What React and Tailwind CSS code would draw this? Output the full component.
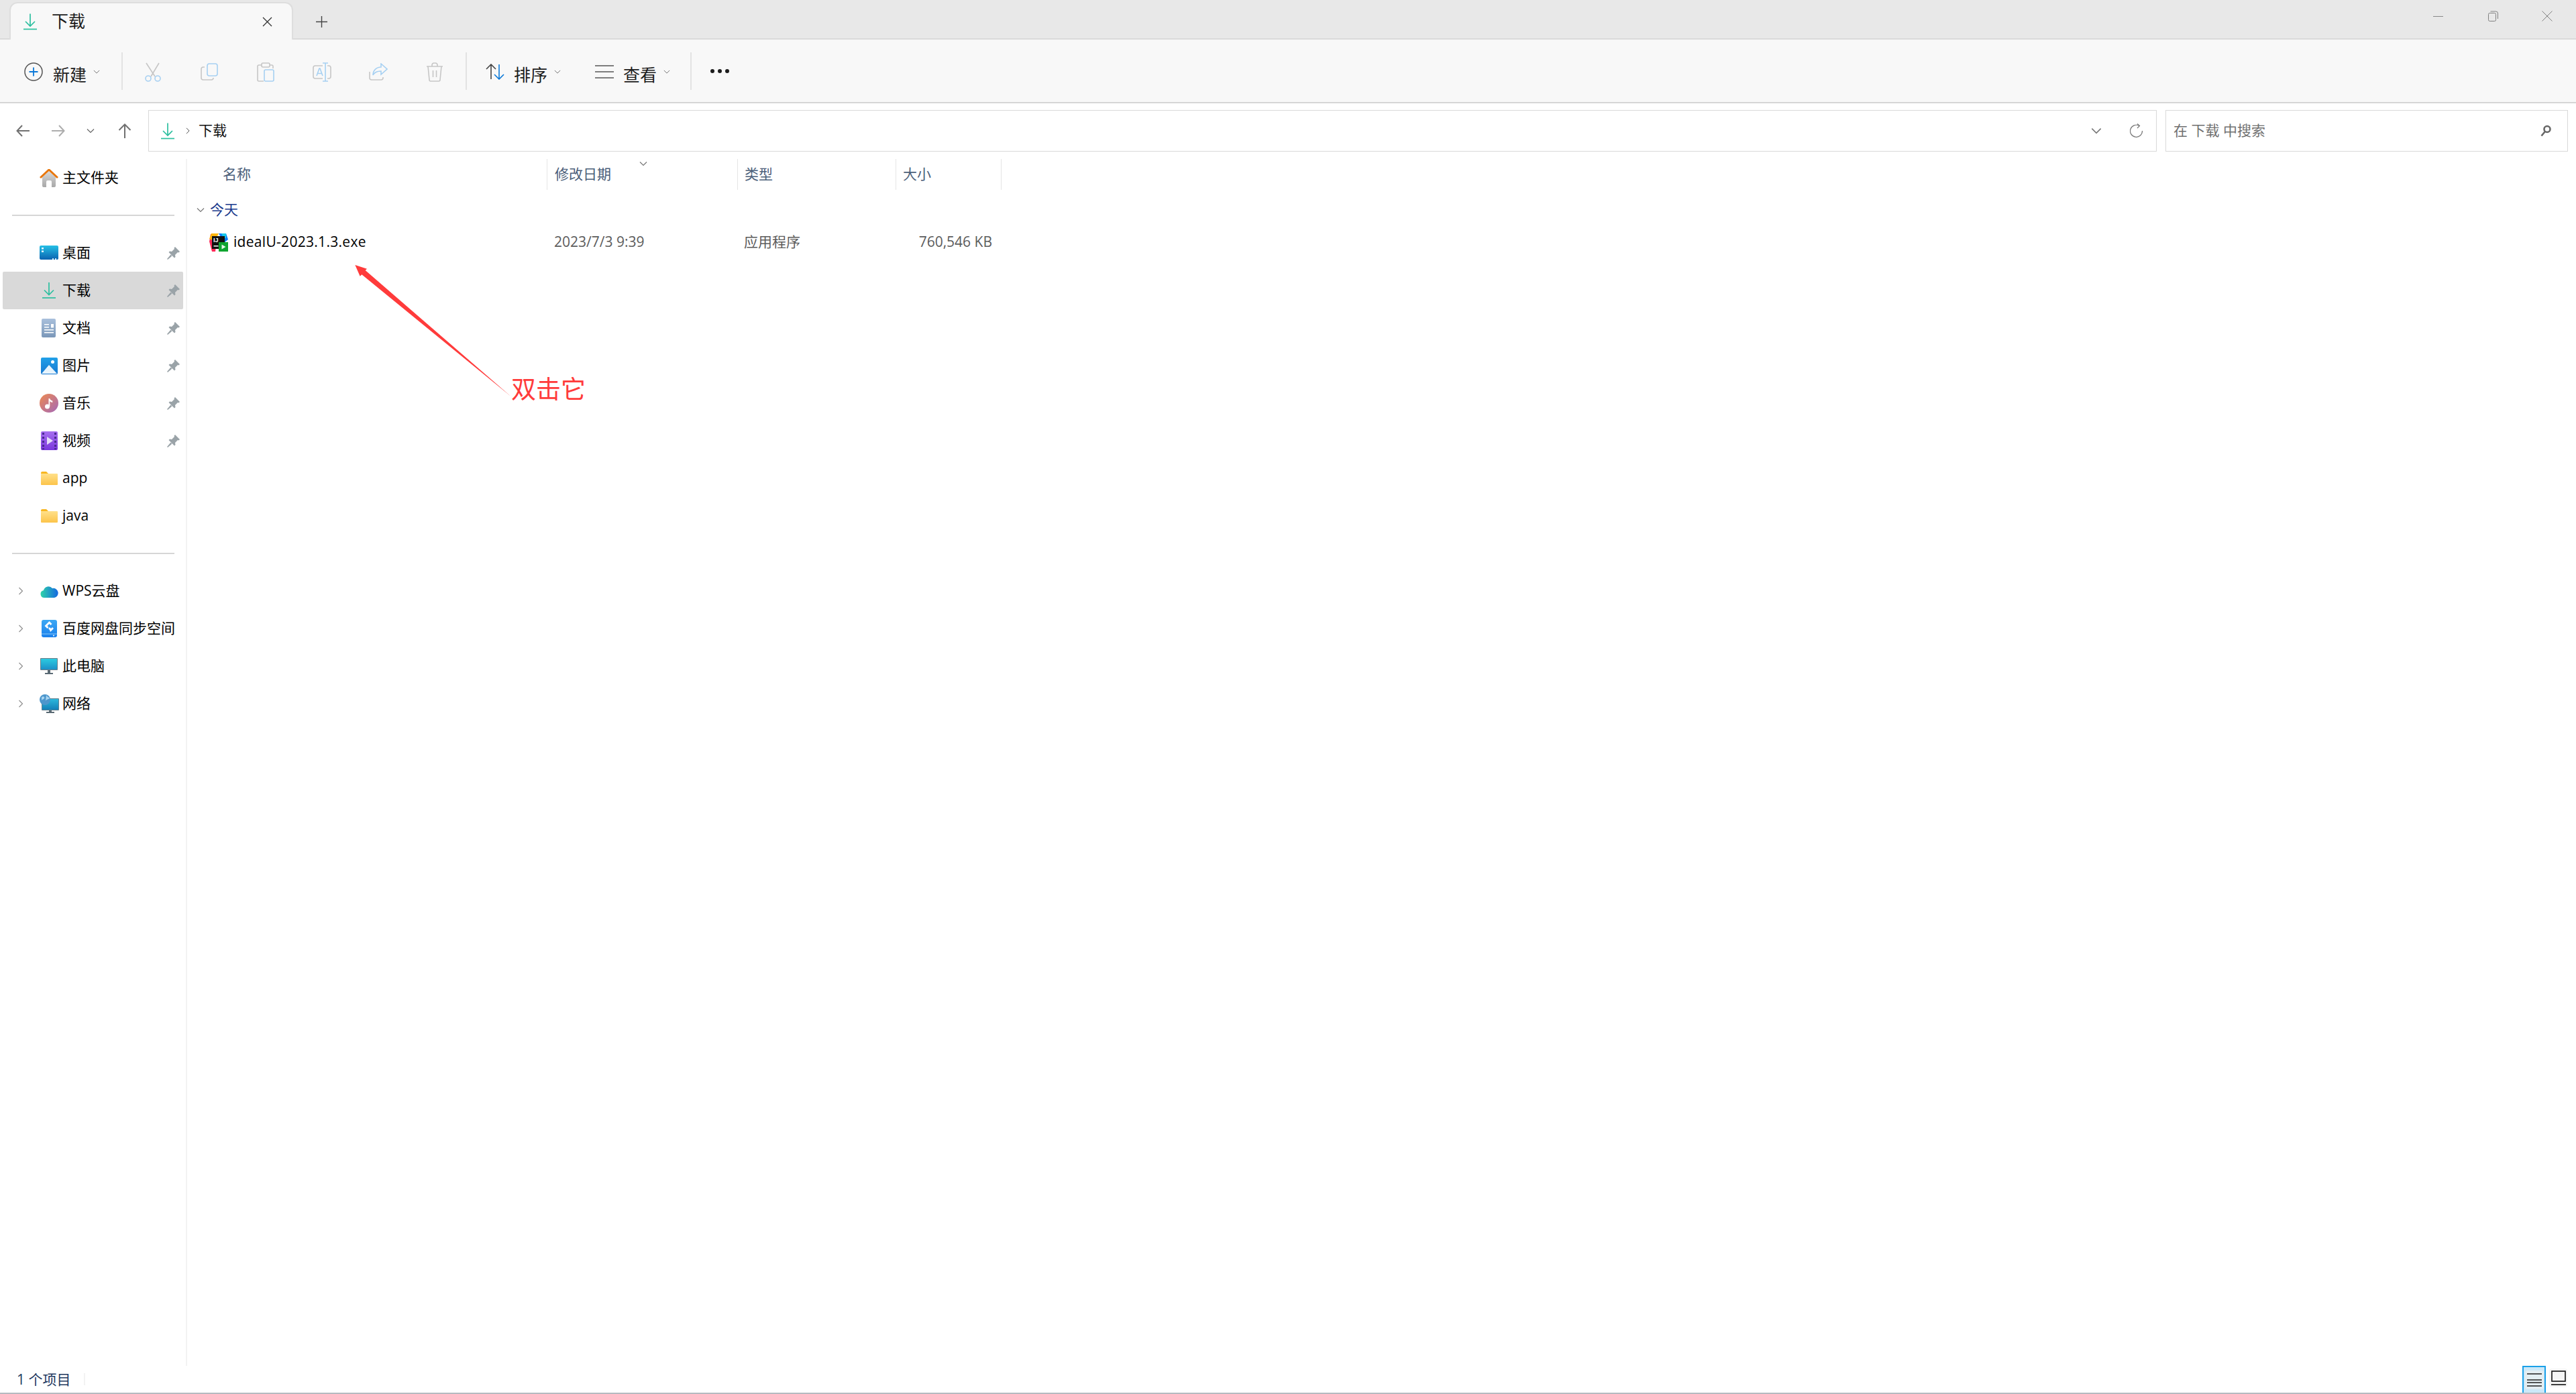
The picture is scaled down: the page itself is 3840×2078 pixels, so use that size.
import React from "react";

const Download = ({ className }) => (
  <svg className={className} viewBox="0 0 20 24" fill="none" stroke="#2cbf9f" strokeWidth="1.7">
    <path d="M10 0v18M3 11.5l7 7 7-7" />
    <path d="M0 23h20" />
  </svg>
);

const Chevron = ({ className, color = "#808080", dir = "down" }) => (
  <svg className={className} viewBox="0 0 12 12" fill="none" stroke={color} strokeWidth="1.2">
    {dir === "down" ? <path d="M1 3.5l5 5 5-5" /> : <path d="M3.5 1l5 5-5 5" />}
  </svg>
);

const CutIcon = () => (
  <svg className="w-[26px] h-[29px]" viewBox="0 0 26 29" fill="none" strokeWidth="1.6">
    <path d="M3 1l13 20M22 1L10 21" stroke="#c6c6c6" />
    <circle cx="6" cy="24" r="4" stroke="#a6d0f2" />
    <circle cx="20" cy="24" r="4" stroke="#a6d0f2" />
  </svg>
);

const CopyIcon = () => (
  <svg className="w-[26px] h-[26px]" viewBox="0 0 26 26" fill="none" strokeWidth="1.6">
    <path d="M6 6H4a3 3 0 0 0-3 3v13a3 3 0 0 0 3 3h12a3 3 0 0 0 3-3" stroke="#c6c6c6" />
    <rect x="10" y="1" width="15" height="18" rx="3" stroke="#a6d0f2" />
  </svg>
);

const PasteIcon = () => (
  <svg className="w-[26px] h-[29px]" viewBox="0 0 26 29" fill="none" strokeWidth="1.6">
    <path d="M7 4H3a2 2 0 0 0-2 2v20a2 2 0 0 0 2 2h7M19 4h3a2 2 0 0 1 2 2v3" stroke="#c6c6c6" />
    <rect x="7" y="1" width="12" height="6" rx="2" stroke="#c6c6c6" />
    <rect x="11" y="11" width="14" height="17" rx="2" stroke="#a6d0f2" />
  </svg>
);

const RenameIcon = () => (
  <svg className="w-[28px] h-[29px]" viewBox="0 0 28 29" fill="none" strokeWidth="1.6">
    <path d="M15 5H4a3 3 0 0 0-3 3v13a3 3 0 0 0 3 3h11M22 5h2a3 3 0 0 1 3 3v13a3 3 0 0 1-3 3h-2" stroke="#c6c6c6" />
    <path d="M15 1h8M15 28h8M19 1v27M6 20l4-11h1l4 11M7.5 16.5h6" stroke="#a6d0f2" />
  </svg>
);

const ShareIcon = () => (
  <svg className="w-[28px] h-[26px]" viewBox="0 0 28 26" fill="none" strokeWidth="1.6">
    <path d="M1 13v9a3 3 0 0 0 3 3h14a3 3 0 0 0 3-3v-1" stroke="#c6c6c6" />
    <path d="M18 1l9 8-9 8v-5c-6 0-10 2-12 6 0-7 5-12 12-12z" stroke="#a6d0f2" />
  </svg>
);

const TrashIcon = () => (
  <svg className="w-[26px] h-[29px]" viewBox="0 0 26 29" fill="none" stroke="#c6c6c6" strokeWidth="1.6">
    <path d="M1 6h24M3 6l2 20a2 2 0 0 0 2 2h12a2 2 0 0 0 2-2l2-20M9 6V4a3 3 0 0 1 3-3h2a3 3 0 0 1 3 3v2M10.5 12v10M15.5 12v10" />
  </svg>
);

const Pin = () => (
  <svg className="w-[19px] h-[19px]" viewBox="0 0 19 19" fill="#9aa3a8">
    <path d="M12 0l7 7-1.5 1.5-1.5-.5-4 4 .5 3L11 16.5 2.5 8 4 6.5l3 .5 4-4-.5-1.500z" />
    <path d="M5.500 11.500l2 2L1 19l-1-1z" />
  </svg>
);

const Grad = ({ id, from, to, x2 = 0, y2 = 1 }) => (
  <defs>
    <linearGradient id={id} x1="0" y1="0" x2={x2} y2={y2}>
      <stop offset="0" stopColor={from} />
      <stop offset="1" stopColor={to} />
    </linearGradient>
  </defs>
);

const HomeIcon = () => (
  <svg className="w-[28px] h-[27px]" viewBox="0 0 28 27">
    <Grad id="homeWall" from="#d9d9d9" to="#a8a8a8" />
    <path d="M4 12L14 3l10 9v13a2 2 0 0 1-2 2h-4v-8a2 2 0 0 0-2-2h-4a2 2 0 0 0-2 2v8H6a2 2 0 0 1-2-2z" fill="url(#homeWall)" />
    <path d="M1 13L14 1l13 12" fill="none" stroke="#e8760c" strokeWidth="3" />
  </svg>
);

const DesktopIcon = () => (
  <svg className="w-[28px] h-[22px]" viewBox="0 0 28 22">
    <Grad id="desk" from="#25c0e6" to="#0b63b0" />
    <rect width="28" height="21" rx="2" fill="url(#desk)" />
    <path d="M3 3h3v2.500H3zM3 7.500h3V10H3z" fill="#e6f7fc" />
    <path d="M19 19h2v2h-2zM23 19h2v2h-2z" fill="#cfeaf5" />
  </svg>
);

const DocIcon = () => (
  <svg className="w-[22px] h-[28px]" viewBox="0 0 22 28">
    <Grad id="doc" from="#a9c0dc" to="#7a97b8" />
    <rect width="21" height="28" rx="2" fill="url(#doc)" />
    <path d="M4 8h7v1.500H4zM4 12h7v1.500H4zM14 8h4v5.500h-4zM4 16h14v1.500H4zM4 20h14v1.500H4z" fill="#fff" />
  </svg>
);

const PictureIcon = () => (
  <svg className="w-[25px] h-[25px]" viewBox="0 0 25 25">
    <Grad id="pic" from="#21a0e8" to="#1878d0" />
    <rect width="25" height="25" rx="2" fill="url(#pic)" />
    <circle cx="17.500" cy="6.500" r="2.500" fill="#fff" />
    <path d="M1 24l11-13 12 13z" fill="#e8f4fc" />
  </svg>
);

const MusicIcon = () => (
  <svg className="w-[28px] h-[28px]" viewBox="0 0 28 28">
    <Grad id="music" from="#ee8a50" to="#a468b8" x2={1} />
    <circle cx="14" cy="14" r="14" fill="url(#music)" />
    <circle cx="11.500" cy="19" r="3.500" fill="#fff" />
    <path d="M13.500 19V7h1.800c.2 2 2 3 4 3.500v2.500c-1.800-.3-3-1-4-2V19z" fill="#fff" />
  </svg>
);

const VideoIcon = () => (
  <svg className="w-[25px] h-[28px]" viewBox="0 0 25 28">
    <Grad id="video" from="#a66ff0" to="#7a38dc" />
    <rect width="25" height="28" rx="2" fill="url(#video)" />
    <path d="M2 2h3v3H2zM2 8h3v3H2zM2 14h3v3H2zM2 20h3v3H2zM2 25h3v2H2zM20 2h3v3h-3zM20 8h3v3h-3zM20 14h3v3h-3zM20 20h3v3h-3zM20 25h3v2h-3z" fill="#4a2a90" />
    <path d="M9 8l9 6-9 6z" fill="#e4dcf8" />
  </svg>
);

const FolderIcon = () => (
  <svg className="w-[25px] h-[20px]" viewBox="0 0 25 20">
    <Grad id="folder" from="#ffe08a" to="#fcc44a" />
    <path d="M0 2a2 2 0 0 1 2-2h6l3 3H0z" fill="#f8b620" />
    <rect y="3" width="25" height="17" rx="1" fill="url(#folder)" />
  </svg>
);

const CloudIcon = () => (
  <svg className="w-[27px] h-[20px]" viewBox="0 0 27 20">
    <Grad id="cloud" from="#2ed3a8" to="#1468e0" x2={1} y2={0} />
    <path d="M6 20a5.500 5.500 0 0 1-1-10.900A7.500 7.500 0 0 1 18 6a6.800 6.800 0 0 1 3 14z" fill="url(#cloud)" />
  </svg>
);

const BaiduIcon = () => (
  <svg className="w-[23px] h-[26px]" viewBox="0 0 23 26">
    <Grad id="baidu" from="#3ca8f4" to="#1a80ec" />
    <rect width="23" height="26" rx="3" fill="url(#baidu)" />
    <path d="M11.500 3l4 4-2 2-2-2-3 3 2 2-2 2-4-4zM12 16l-2-2 2-2 2 2 2-2 2 2-5 5z" fill="#fff" transform="translate(0 -1)" />
    <path d="M0 21h23" stroke="#8ccbf8" strokeWidth="1" />
    <circle cx="18" cy="23.500" r="1" fill="#fff" />
  </svg>
);

const PcIcon = () => (
  <svg className="w-[26px] h-[24px]" viewBox="0 0 26 24">
    <Grad id="pc" from="#2ccbe0" to="#1c90c8" />
    <rect width="26" height="18" rx="1" fill="#6b7d88" />
    <rect x="1" y="1" width="24" height="16" fill="url(#pc)" />
    <path d="M11 18h4v4h-4zM7 22h12v2H7z" fill="#5a6a74" />
  </svg>
);

const NetworkIcon = () => (
  <svg className="w-[29px] h-[28px]" viewBox="0 0 29 28">
    <Grad id="net" from="#2cb8dc" to="#1480b8" />
    <rect x="3" y="6" width="26" height="18" rx="1" fill="#60808e" />
    <rect x="4" y="7" width="24" height="16" fill="url(#net)" />
    <path d="M14 24h4v2h-4zM10 26h12v2H10z" fill="#5a6a74" />
    <circle cx="8" cy="8" r="8" fill="#4c96cc" />
    <path d="M3 4c3-2 5 0 4 2s-3 1-4 3M10 1c1 3 4 3 5 5-2 2-5 1-6 4" fill="#a8d4f0" />
  </svg>
);

const IdeaIcon = () => (
  <svg className="w-[28px] h-[27px]" viewBox="0 0 28 27">
    <path d="M2 1h10l-3 26H4L0 12z" fill="#fe2857" />
    <path d="M3 0h11L8 12 0 8z" fill="#fdb60d" />
    <path d="M14 0h11l3 9-6 5z" fill="#087cfa" />
    <path d="M18 0h7v7h-4z" fill="#17c8e8" />
    <rect x="4" y="4" width="19" height="19" fill="#111" />
    <text x="6" y="13" fontFamily="Liberation Sans" fontSize="9" fontWeight="700" fill="#fff">IJ</text>
    <path d="M6.500 18h7v1.500h-7z" fill="#fff" />
    <rect x="14" y="13" width="14" height="14" fill="#0fa42f" />
    <path d="M18.500 16.500l6 3.500-6 3.500z" fill="#e8f8ea" />
  </svg>
);

const sideGroups = [
  { icon: <DesktopIcon />, label: "桌面", pin: true },
  { icon: <Download className="w-[20px] h-[24px]" />, label: "下载", pin: true, active: true },
  { icon: <DocIcon />, label: "文档", pin: true },
  { icon: <PictureIcon />, label: "图片", pin: true },
  { icon: <MusicIcon />, label: "音乐", pin: true },
  { icon: <VideoIcon />, label: "视频", pin: true },
  { icon: <FolderIcon />, label: "app" },
  { icon: <FolderIcon />, label: "java" },
];

const driveItems = [
  { icon: <CloudIcon />, label: "WPS云盘" },
  { icon: <BaiduIcon />, label: "百度网盘同步空间" },
  { icon: <PcIcon />, label: "此电脑" },
  { icon: <NetworkIcon />, label: "网络" },
];

const SideRow = ({ item, expand }) => (
  <div className={`relative flex items-center h-[56px] mx-[4px] rounded-[2px] ${item.active ? "bg-[#d9d9d9]" : ""}`}>
    <div className="w-[22px] ml-[21px] flex items-center">
      {expand && <Chevron className="w-[12px] h-[16px]" dir="right" color="#909090" />}
    </div>
    <div className="w-[30px] ml-[11px] flex items-center justify-center">{item.icon}</div>
    <span className="ml-[5px] text-[21px] text-black whitespace-nowrap">{item.label}</span>
    {item.pin && (
      <div className="ml-auto mr-[5px] flex">
        <Pin />
      </div>
    )}
  </div>
);

const Sep = ({ className }) => <div className={`w-[2px] h-[56px] -mt-[3px] bg-[#e3e3e3] ${className}`} />;

const ToolText = ({ children }) => (
  <span className="w-[50px] text-[25px] leading-none mt-[8px] text-[#1c1c1c] whitespace-nowrap">{children}</span>
);

const ToolSlot = ({ children }) => <div className="w-[84px] flex items-center justify-center">{children}</div>;

export default function App() {
  return (
    <div className="h-screen flex flex-col bg-white overflow-hidden relative font-['Open_Sans','Noto_Sans_CJK_SC',sans-serif]">
      {/* title bar */}
      <div className="h-[59px] shrink-0 flex bg-[#e8e8e8] border-b-2 border-[#dadada]">
        <div className="ml-[14px] mt-[3px] w-[423px] h-[56px] flex items-center bg-[#f8f8f8] rounded-t-[12px] border-2 border-b-0 border-[#dedede]">
          <Download className="w-[20px] h-[25px] ml-[19px]" />
          <span className="ml-[22px] text-[25px] text-[#1c1c1c]">下载</span>
          <svg className="w-[15px] h-[15px] ml-auto mr-[29px]" viewBox="0 0 15 15" stroke="#333" strokeWidth="1.3">
            <path d="M1 1l13 13M14 1L1 14" />
          </svg>
        </div>
        <svg className="w-[17px] h-[17px] ml-[34px] mt-[24px]" viewBox="0 0 17 17" stroke="#444" strokeWidth="1.4">
          <path d="M8.500 0v17M0 8.500h17" />
        </svg>
        <div className="ml-auto mr-[35px] h-[48px] flex items-center">
          <div className="w-[15px] h-px bg-[#888]" />
          <svg className="w-[15px] h-[16px] ml-[67px]" viewBox="0 0 15 16" fill="none" stroke="#808080">
            <rect x="0.500" y="3.500" width="11" height="12" rx="2" />
            <path d="M3.500 1h8a3 3 0 0 1 3 3v8" />
          </svg>
          <svg className="w-[16px] h-[16px] ml-[65px]" viewBox="0 0 16 16" stroke="#808080">
            <path d="M0.500 0.500l15 15M15.500 0.500l-15 15" />
          </svg>
        </div>
      </div>

      {/* command bar */}
      <div className="h-[95px] shrink-0 flex items-center pl-[36px] pt-[3px] bg-[#f8f8f8] border-b-2 border-[#d6d6d6]">
        <svg className="w-[28px] h-[28px] mr-[15px]" viewBox="0 0 28 28" fill="none">
          <circle cx="14" cy="14" r="13" stroke="#555" strokeWidth="1.5" />
          <path d="M14 7.500v13M7.500 14h13" stroke="#0a78d8" strokeWidth="1.8" />
        </svg>
        <ToolText>新建</ToolText>
        <Chevron className="w-[10px] h-[10px] ml-[10px]" color="#777" />
        <Sep className="ml-[32px]" />
        <div className="flex ml-[3px]">
          <ToolSlot>
            <CutIcon />
          </ToolSlot>
          <ToolSlot>
            <CopyIcon />
          </ToolSlot>
          <ToolSlot>
            <PasteIcon />
          </ToolSlot>
          <ToolSlot>
            <RenameIcon />
          </ToolSlot>
          <ToolSlot>
            <ShareIcon />
          </ToolSlot>
          <ToolSlot>
            <TrashIcon />
          </ToolSlot>
        </div>
        <Sep className="ml-[4px]" />
        <svg className="w-[28px] h-[24px] ml-[28px] mr-[14px]" viewBox="0 0 28 24" fill="none" strokeWidth="1.6">
          <path d="M8 23V1M1 8l7-7 7 7" stroke="#444" />
          <path d="M20 1v22M13 16l7 7 7-7" stroke="#0a78d8" />
        </svg>
        <ToolText>排序</ToolText>
        <Chevron className="w-[10px] h-[10px] ml-[10px]" color="#777" />
        <svg className="w-[28px] h-[20px] ml-[51px] mr-[14px]" viewBox="0 0 28 20" stroke="#555" strokeWidth="1.6">
          <path d="M0 1h28M0 10h28M0 19h28" />
        </svg>
        <ToolText>查看</ToolText>
        <Chevron className="w-[10px] h-[10px] ml-[10px]" color="#777" />
        <Sep className="ml-[30px]" />
        <div className="flex gap-[5px] ml-[28px] -mt-[2px]">
          <div className="w-[6px] h-[6px] rounded-full bg-[#1c1c1c]" />
          <div className="w-[6px] h-[6px] rounded-full bg-[#1c1c1c]" />
          <div className="w-[6px] h-[6px] rounded-full bg-[#1c1c1c]" />
        </div>
      </div>

      {/* address row */}
      <div className="h-[83px] shrink-0 flex pt-[10px] pl-[24px] pr-[12px]">
        <div className="h-[62px] flex items-center shrink-0">
          <svg className="w-[20px] h-[18px]" viewBox="0 0 20 18" fill="none" stroke="#707070" strokeWidth="2">
            <path d="M20 9H2M9 1L1.500 9 9 17" />
          </svg>
          <svg className="w-[20px] h-[18px] ml-[33px]" viewBox="0 0 20 18" fill="none" stroke="#adadad" strokeWidth="2">
            <path d="M0 9h18M11 1l7.500 8L11 17" />
          </svg>
          <Chevron className="w-[12px] h-[12px] ml-[32px]" color="#666" />
          <svg className="w-[20px] h-[22px] ml-[35px]" viewBox="0 0 20 22" fill="none" stroke="#707070" strokeWidth="2">
            <path d="M10 22V2M1.500 10L10 1.500 18.500 10" />
          </svg>
        </div>
        <div className="ml-[25px] flex-1 h-[62px] flex items-center pl-[18px] pr-[19px] border border-[#d9d9d9]">
          <Download className="w-[20px] h-[25px]" />
          <Chevron className="w-[10px] h-[12px] ml-[15px]" dir="right" color="#555" />
          <span className="ml-[11px] text-[21px] text-[#111]">下载</span>
          <Chevron className="w-[16px] h-[16px] ml-auto" color="#777" />
          <svg className="w-[20px] h-[22px] ml-[42px]" viewBox="0 0 20 22" fill="none" stroke="#777" strokeWidth="1.2">
            <path d="M14 3.500A9 9 0 1 0 18.500 11M11 0.500l3.500 3-3.500 3.500" />
          </svg>
        </div>
        <div className="ml-[13px] w-[600px] h-[62px] flex items-center pl-[11px] pr-[24px] border border-[#d9d9d9]">
          <span className="text-[21px] text-[#707070] whitespace-nowrap">在 下载 中搜索</span>
          <svg className="w-[16px] h-[18px] ml-auto" viewBox="0 0 16 18" fill="none" stroke="#666" strokeWidth="2.600">
            <circle cx="10" cy="6.500" r="4.500" />
            <path d="M6.500 10.500L1.500 16.500" />
          </svg>
        </div>
      </div>

      {/* body */}
      <div className="flex-1 min-h-0 flex">
        <div className="w-[279px] shrink-0 border-r-2 border-[#f3f3f3]">
          <SideRow item={{ icon: <HomeIcon />, label: "主文件夹" }} />
          <div className="h-[56px] flex items-center pl-[18px]">
            <div className="w-[242px] h-[2px] bg-[#d6d6d6]" />
          </div>
          {sideGroups.map((item) => (
            <SideRow key={item.label} item={item} />
          ))}
          <div className="h-[56px] flex items-center pl-[18px]">
            <div className="w-[242px] h-[2px] bg-[#d6d6d6]" />
          </div>
          {driveItems.map((item) => (
            <SideRow key={item.label} item={item} expand />
          ))}
        </div>

        <div className="flex-1">
          <div className="flex h-[46px] text-[21px] text-[#4c607a]">
            <div className="w-[536px] flex items-center pl-[53px]">名称</div>
            <div className="relative w-[284px] flex items-center pl-[11px] border-l border-[#e5e5e5]">
              修改日期
              <Chevron className="absolute left-[137px] top-[1px] w-[12px] h-[12px]" color="#777" />
            </div>
            <div className="w-[236px] flex items-center pl-[10px] border-l border-[#e5e5e5]">类型</div>
            <div className="w-[158px] flex items-center pl-[10px] border-x border-[#e5e5e5]">大小</div>
          </div>
          <div className="mt-[7px] h-[46px] flex items-center pl-[14px]">
            <Chevron className="w-[12px] h-[12px]" color="#777" />
            <span className="ml-[8px] text-[21px] text-[#1a3a8c]">今天</span>
          </div>
          <div className="mt-[2px] h-[46px] flex items-center text-[21px] text-[#5c5c5c]">
            <div className="w-[536px] flex items-center pl-[33px]">
              <IdeaIcon />
              <span className="ml-[8px] text-black tracking-[0.3px]">idealU-2023.1.3.exe</span>
            </div>
            <div className="w-[284px] pl-[11px]">2023/7/3 9:39</div>
            <div className="w-[236px] pl-[10px]">应用程序</div>
            <div className="w-[158px] pr-[14px] text-right">760,546 KB</div>
          </div>
        </div>
      </div>

      {/* status bar */}
      <div className="h-[42px] shrink-0 flex items-center pl-[25px] pr-[13px] border-b-2 border-[#b6bac0]">
        <span className="text-[21px] text-[#1f3a5f] leading-none">1 个项目</span>
        <div className="w-[2px] h-[18px] ml-[20px] bg-[#f3f3f3]" />
        <div className="ml-auto self-stretch w-[35px] flex items-center justify-center bg-[#cce8f8] border-2 border-b-0 border-[#1aa0e8]">
          <div className="w-[28px] h-[28px] rounded-[4px] bg-[#e4eef2] flex items-center justify-center">
            <svg className="w-[22px] h-[20px]" viewBox="0 0 22 20" stroke="#222" strokeWidth="1.600">
              <path d="M0 1h22M0 10h22M0 14h22M0 19h22" />
            </svg>
          </div>
        </div>
        <div className="ml-[5px] w-[27px] h-[28px] mb-[4px] rounded-[4px] bg-[#f5f5f5] flex items-center justify-center">
          <svg className="w-[22px] h-[22px]" viewBox="0 0 22 22" fill="none" stroke="#111" strokeWidth="1.600">
            <rect x="1" y="1" width="20" height="15" />
            <path d="M0 21h22" />
          </svg>
        </div>
      </div>

      {/* annotation drawn over the file list */}
      <svg className="absolute left-[500px] top-[380px] w-[420px] h-[240px]" viewBox="0 0 1260 720" fill="#ff3b3b">
        <path d="M88 45l53 17-7 7L785 633 118 88l-8 7z" />
      </svg>
      <span className="absolute left-[762px] top-[553px] text-[37px] leading-[54px] text-[#ff3b3b]">双击它</span>
    </div>
  );
}
